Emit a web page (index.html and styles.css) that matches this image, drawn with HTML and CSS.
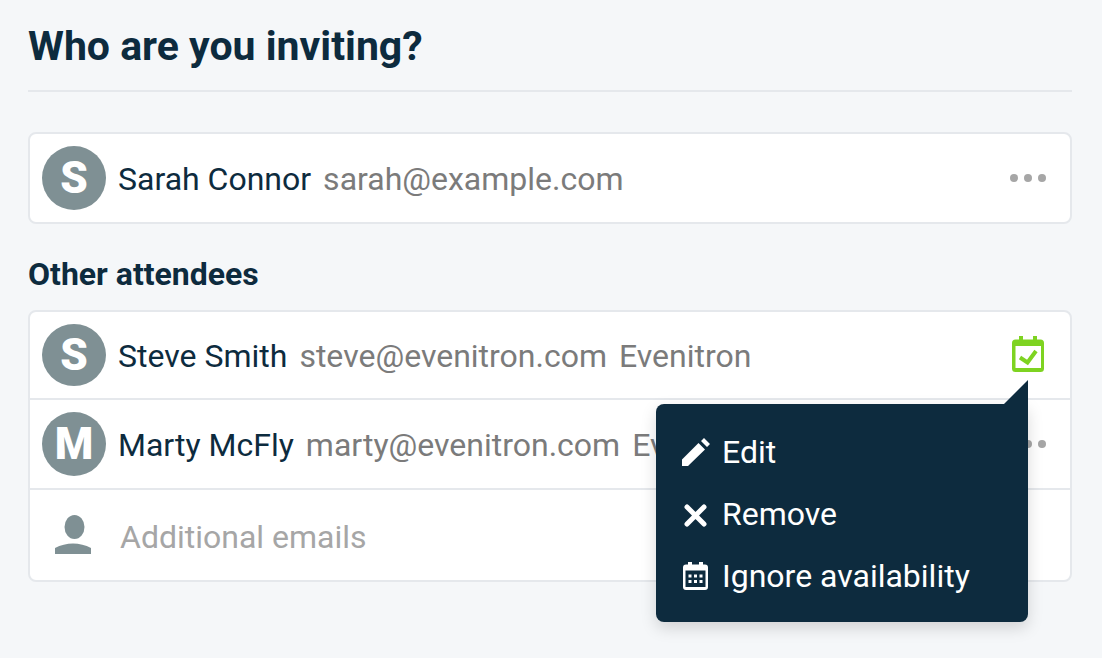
FILE: index.html
```html
<!DOCTYPE html>
<html lang="en">
<head>
    <meta charset="UTF-8">
    <meta name="viewport" content="width=device-width, initial-scale=1.0">
    <title>Who are you inviting?</title>
    <link rel="stylesheet" href="styles.css">
</head>
<body>
    <main class="invite">
        <h1>Who are you inviting?</h1>

        <ul class="attendee-list">
            <li class="attendee">
                <span class="avatar">S</span>
                <p class="details"><span class="name">Sarah Connor</span><span class="email">sarah@example.com</span></p>
                <button type="button" class="row-button" aria-label="Options for Sarah Connor">
                    <svg width="36" height="8" viewBox="0 0 36 8"><circle cx="4" cy="4" r="4"/><circle cx="18" cy="4" r="4"/><circle cx="32" cy="4" r="4"/></svg>
                </button>
            </li>
        </ul>

        <h2>Other attendees</h2>

        <ul class="attendee-list others">
            <li class="attendee">
                <span class="avatar">S</span>
                <p class="details"><span class="name">Steve Smith</span><span class="email">steve@evenitron.com</span><span class="company">Evenitron</span></p>
                <button type="button" class="row-button available" aria-label="Options for Steve Smith" aria-expanded="true">
                    <svg width="32" height="38" viewBox="0 0 32 38">
                        <path fill-rule="evenodd" d="M7 0h4v3.500h10V0h4v3.500h3.500a3.500 3.500 0 0 1 3.500 3.500v25.500a3.500 3.500 0 0 1-3.500 3.500h-25A3.500 3.500 0 0 1 0 32.500V7a3.500 3.500 0 0 1 3.500-3.500H7zM3.500 10v22h25.500V10z"/>
                        <path class="tick" d="M8 21.500l7.500 5L24 15"/>
                    </svg>
                </button>
                <div class="menu">
                    <button type="button" class="menu-item">
                        <svg width="28" height="28" viewBox="0 0 28 28"><path d="M0 28v-6.500L16.500 5l6.500 6.500L6 28zM19 3l3-3 6 6-3 3z"/></svg>
                        Edit
                    </button>
                    <button type="button" class="menu-item">
                        <svg width="28" height="28" viewBox="0 0 28 28"><path class="cross" d="M5 7l17 17M22 7L5 24"/></svg>
                        Remove
                    </button>
                    <button type="button" class="menu-item">
                        <svg width="28" height="28" viewBox="0 0 28 28">
                            <path fill-rule="evenodd" d="M6 0h4v2.500h7V0h4v2.500h2a3 3 0 0 1 3 3V25a3 3 0 0 1-3 3H4a3 3 0 0 1-3-3V5.500a3 3 0 0 1 3-3h2zM3.500 8.500V25h20V8.500z"/>
                            <path d="M6.500 12.500h3v3h-3zM12 12.500h3v3h-3zM17.500 12.500h3v3h-3zM6.500 18h3v3h-3zM12 18h3v3h-3zM17.500 18h3v3h-3z"/>
                        </svg>
                        Ignore availability
                    </button>
                </div>
            </li>
            <li class="attendee">
                <span class="avatar">M</span>
                <p class="details"><span class="name">Marty McFly</span><span class="email">marty@evenitron.com</span><span class="company">Evenitron</span></p>
                <button type="button" class="row-button" aria-label="Options for Marty McFly">
                    <svg width="36" height="8" viewBox="0 0 36 8"><circle cx="4" cy="4" r="4"/><circle cx="18" cy="4" r="4"/><circle cx="32" cy="4" r="4"/></svg>
                </button>
            </li>
            <li class="attendee">
                <label class="person" for="emails" aria-label="Additional emails">
                    <svg width="38" height="40" viewBox="0 0 38 40"><ellipse cx="19.500" cy="12" rx="10" ry="12"/><path d="M0 39v-6c11-6 25-6 36 0v6z"/></svg>
                </label>
                <input type="text" id="emails" class="emails" placeholder="Additional emails">
            </li>
        </ul>
    </main>
</body>
</html>
```
FILE: styles.css
```css
* {
    box-sizing: border-box;
}
body {
    min-height: 100vh;
    margin: 0;
    background-color: #f5f7f9;
    color: #0d2b3e;
    font-family: Roboto, sans-serif;
    font-size: 32px;
    line-height: 40px;
}
.invite {
    padding: 20px 30px 40px 28px;
}
h1 {
    margin: 0 0 40px;
    padding-bottom: 18px;
    border-bottom: 2px solid #e5e8ec;
    font-size: 41px;
    line-height: 52px;
}
h2 {
    margin: 30px 0 16px;
    font-size: 32px;
    line-height: 40px;
}
.attendee-list {
    margin: 0;
    padding: 0;
    list-style: none;
    background-color: white;
    border: 2px solid #e5e8ec;
    border-radius: 8px;
}
.attendee {
    position: relative;
    display: flex;
    align-items: center;
    gap: 12px;
    height: 88px;
    padding: 12px 24px 12px 12px;
}
.others .attendee + .attendee {
    height: 90px;
}
.others .attendee:not(:last-child) {
    border-bottom: 2px solid #e5e8ec;
}
.avatar, .person {
    display: flex;
    flex: none;
    align-self: stretch;
    align-items: center;
    justify-content: center;
    width: 64px;
}
.avatar {
    background-color: #7f9094;
    border-radius: 50%;
    color: white;
    font-size: 44px;
    font-weight: 900;
}
.person {
    fill: #7f9094;
}
.details {
    display: flex;
    flex: 1;
    gap: 12px;
    margin: 0;
    padding-top: 2px;
    white-space: nowrap;
}
.email, .company {
    color: #7b7b7b;
}
button {
    padding: 0;
    border: none;
    background: none;
    color: inherit;
    font: inherit;
    cursor: pointer;
}
svg {
    display: block;
    flex: none;
}
.row-button {
    display: flex;
    justify-content: center;
    width: 36px;
    fill: #a6a6a6;
}
.available {
    fill: #7ed321;
}
.tick {
    fill: none;
    stroke: #7ed321;
    stroke-width: 4;
}
.menu {
    position: absolute;
    z-index: 1;
    top: 92px;
    right: 42px;
    width: 372px;
    padding: 16px 0;
    background-color: #0d2b3e;
    border-radius: 8px 0 8px 8px;
    box-shadow: 0 6px 16px rgba(0, 0, 0, 0.15);
    color: white;
}
.menu::before {
    content: "";
    position: absolute;
    right: 0;
    bottom: 100%;
    border-right: 24px solid #0d2b3e;
    border-top: 24px solid transparent;
}
.menu-item {
    display: flex;
    align-items: center;
    gap: 12px;
    width: 100%;
    height: 62px;
    padding: 2px 26px 0;
    fill: white;
}
.cross {
    stroke: white;
    stroke-width: 5;
    stroke-linecap: round;
}
.emails {
    flex: 1;
    min-width: 0;
    padding: 4px 0 0 2px;
    border: none;
    outline: none;
    background: none;
    color: inherit;
    font: inherit;
}
.emails::placeholder {
    color: #a6a6a6;
    opacity: 1;
}
```
